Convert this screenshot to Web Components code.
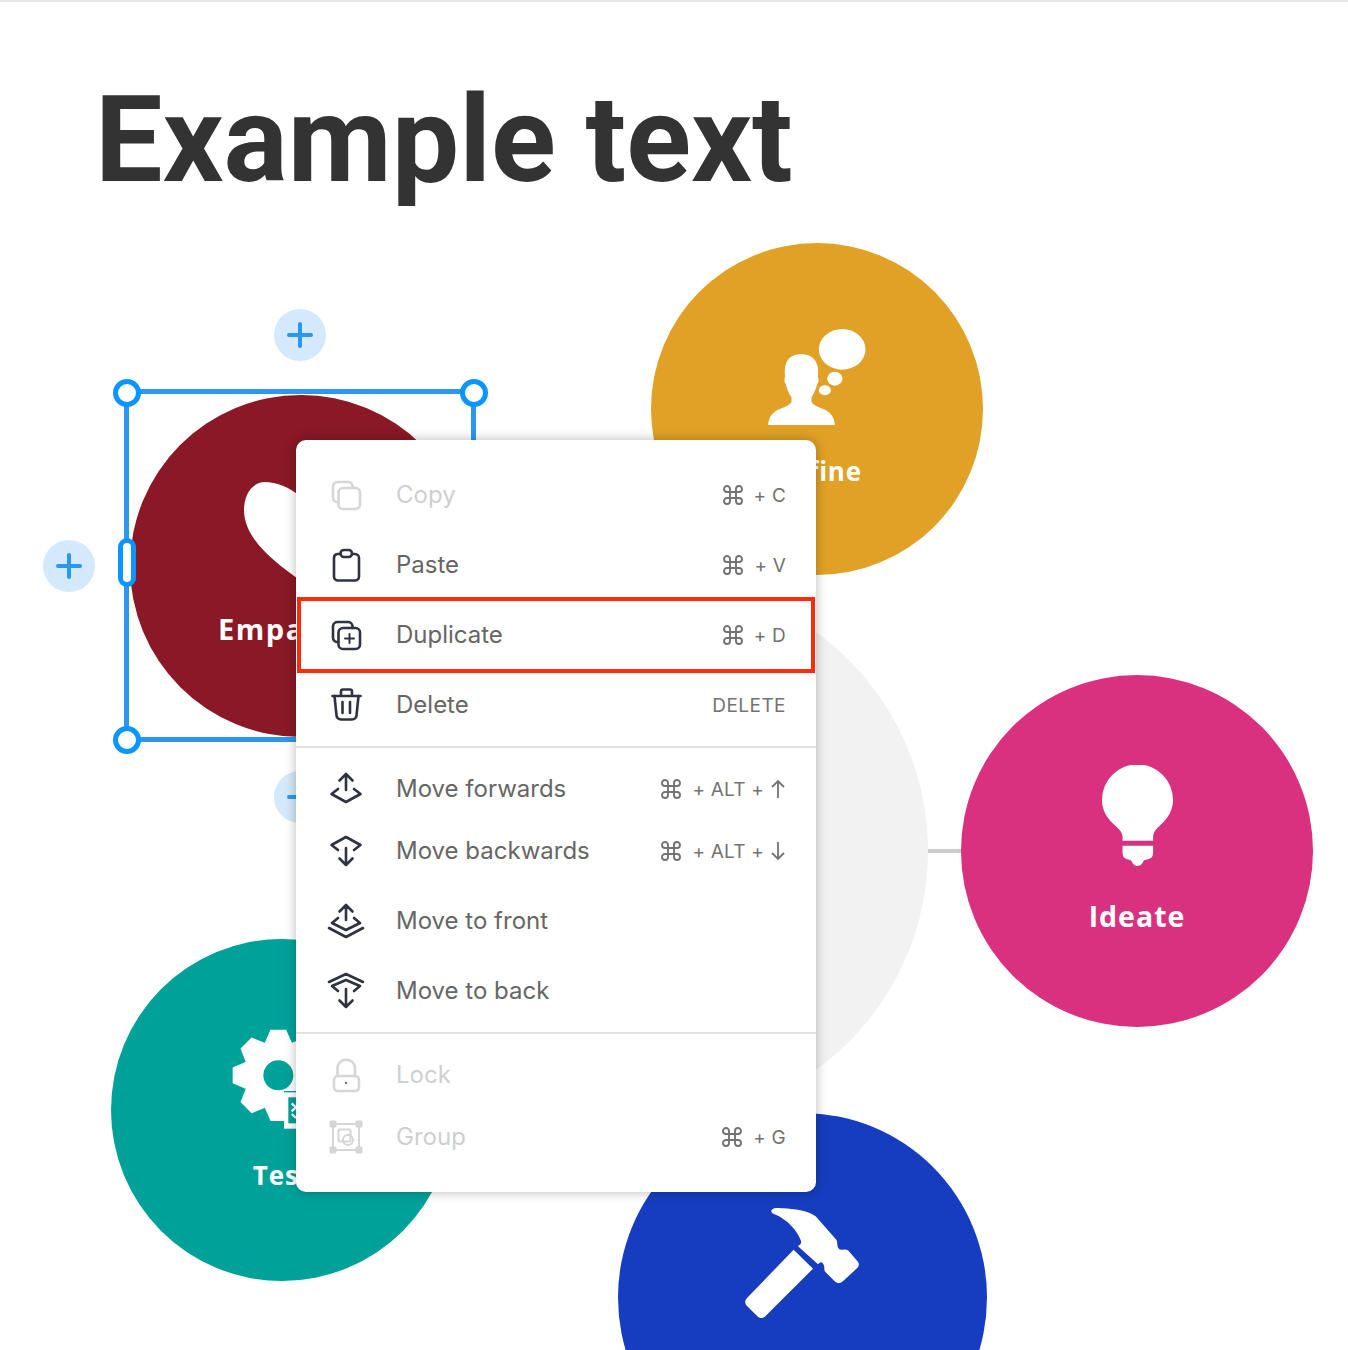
<!DOCTYPE html>
<html lang="en">
<head>
<meta charset="utf-8">
<title>Example text</title>
<style>
  html, body { margin: 0; background: #fff; }
</style>
</head>
<body>
<design-canvas>
  <page-title>Example text</page-title>

  <hub-circle></hub-circle>

  <flow-node style="--x:651px;--y:243px;--d:332px;--bg:#E0A126;--top:86px;--gap:23px;--fs:26px;--ls:.8px" label="Define">
    <svg slot="icon" width="100" height="99" viewBox="83 57 297 297">
      <ellipse cx="307" cy="118" rx="70" ry="61" fill="#fff"/>
      <ellipse cx="285" cy="206" rx="23" ry="21" fill="#fff"/>
      <ellipse cx="255" cy="241" rx="18" ry="15" fill="#fff"/>
      <path fill="#fff" d="M85 345C86 320 100 305 120 297C135 291 150 285 155 275V262C147 250 140 235 138 222C132 215 134 205 136 200C132 165 140 133 185 133C225 133 240 165 234 200C237 208 238 215 232 222C230 235 222 250 215 262V275C220 285 235 291 250 297C270 305 284 320 285 345Z"/>
    </svg>
  </flow-node>

  <flow-node style="--x:130px;--y:395px;--d:342px;--bg:#8A1826;--top:87px;--gap:27px;--fs:29px;--ls:1.500px" label="Empathize">
    <svg slot="icon" width="114" height="100" viewBox="244 482 114 100">
      <path fill="#fff" d="M301 497C290 487 275 482 265 482C252 482 244 495 244 510C244 538 272 560 301 581C330 560 358 538 358 510C358 495 350 482 337 482C327 482 312 487 301 497Z"/>
    </svg>
  </flow-node>

  <flow-node style="--x:961px;--y:675px;--d:352px;--bg:#D9307F;--top:90px;--gap:29px;--fs:28.500px" label="Ideate">
    <svg slot="icon" width="73" height="102" viewBox="60 45 220 307">
      <path fill="#fff" d="M125 273V262C125 245 110 235 100 225C78 205 63 180 63 150A107 107 0 0 1 277 150C277 180 262 205 240 225C230 235 217 245 217 262V273Z"/>
      <path fill="#fff" d="M125 288H217V310Q217 328 195 330C190 330 188 335 185 340C178 352 162 352 155 340C152 335 150 330 145 330Q125 328 125 310Z"/>
    </svg>
  </flow-node>

  <flow-node style="--x:111px;--y:939px;--d:342px;--bg:#00A199;--top:90px;--gap:26px;--fs:26px" label="Test">
    <gear-icon slot="icon"></gear-icon>
  </flow-node>

  <flow-node style="--x:618px;--y:1113px;--d:369px;--bg:#163DBF;--top:94px;--gap:24px">
    <svg slot="icon" width="117" height="112" viewBox="70 50 351 336" style="margin-left:-2px">
      <path fill="#fff" d="M158 57C165 52 172 53 190 54C225 56 262 60 288 78L350 148C355 155 350 165 358 176C365 182 375 173 385 180L413 212C420 220 418 228 412 234L368 274C360 280 352 280 345 273L318 246C310 238 318 230 310 220C306 212 300 216 295 222L235 168C240 162 248 160 243 150C235 125 205 88 165 72C155 68 152 62 158 57Z"/>
      <path fill="#fff" d="M222 178L280 235L137 378C130 385 120 385 113 378L82 347C75 340 75 330 82 323Z"/>
    </svg>
  </flow-node>

  <selection-frame></selection-frame>

  <add-button style="--x:274px;--y:309px"></add-button>
  <add-button style="--x:43px;--y:540px"></add-button>
  <add-button style="--x:274px;--y:771px"></add-button>

  <context-menu>
    <menu-item label="Copy" disabled style="--h:70px">
      <svg slot="icon" viewBox="0 0 40 40" width="40" height="40" fill="none" stroke="#d6d6d6" stroke-width="2.6" stroke-linecap="round" stroke-linejoin="round">
        <path d="M12 27H11A4.500 4.500 0 0 1 7 22.500V11A4.500 4.500 0 0 1 11.500 7H22A4.500 4.500 0 0 1 26.500 11V13"/>
        <rect x="12.500" y="13" width="21.500" height="21" rx="4.500"/>
      </svg>
      <key-combo slot="keys" text="+ C"></key-combo>
    </menu-item>
    <menu-item label="Paste" style="--h:70px">
      <svg slot="icon" viewBox="0 0 40 40" width="40" height="40" fill="none" stroke="#2f3240" stroke-width="2.6" stroke-linecap="round" stroke-linejoin="round">
        <path d="M14 9H11.500A4 4 0 0 0 8 13V31.500A4 4 0 0 0 12 35.500H29A4 4 0 0 0 33 31.500V13A4 4 0 0 0 29 9H26.500"/>
        <rect x="14.500" y="5" width="11.500" height="7" rx="3.500"/>
      </svg>
      <key-combo slot="keys" text="+ V"></key-combo>
    </menu-item>
    <menu-item label="Duplicate" style="--h:70px">
      <svg slot="icon" viewBox="0 0 40 40" width="40" height="40" fill="none" stroke="#2f3240" stroke-width="2.6" stroke-linecap="round" stroke-linejoin="round">
        <path d="M12 27H11A4.500 4.500 0 0 1 7 22.500V11A4.500 4.500 0 0 1 11.500 7H22A4.500 4.500 0 0 1 26.500 11V13"/>
        <rect x="12.500" y="13" width="21.500" height="21" rx="4.500"/>
        <path d="M23.500 19V28M19 23.500H28" stroke-width="2"/>
      </svg>
      <key-combo slot="keys" text="+ D"></key-combo>
    </menu-item>
    <menu-item label="Delete" style="--h:70px">
      <svg slot="icon" viewBox="0 0 40 40" width="40" height="40" fill="none" stroke="#2f3240" stroke-width="2.6" stroke-linecap="round" stroke-linejoin="round">
        <path d="M6.500 11H34.500M15 10V6.500A2 2 0 0 1 17 4.500H24A2 2 0 0 1 26 6.500V10"/>
        <path d="M8.500 11L10.500 30.500A4.500 4.500 0 0 0 15 34.500H26A4.500 4.500 0 0 0 30.500 30.500L32.500 11"/>
        <path d="M16.500 17V28M24 17V28"/>
      </svg>
      <span slot="keys" style="letter-spacing:.45px">DELETE</span>
    </menu-item>
    <menu-rule style="--above:6px;--below:10px"></menu-rule>
    <menu-item label="Move forwards" style="--h:62px">
      <svg slot="icon" viewBox="0 0 40 40" width="40" height="40" fill="none" stroke="#2f3240" stroke-width="2.6" stroke-linecap="round" stroke-linejoin="round">
        <path d="M20 21V5M13.500 11.500L20 5L26.500 11.500M12 20L5.500 25L20 33L34.500 25L28 20"/>
      </svg>
      <key-combo slot="keys" text="+ ALT +" arrow="up"></key-combo>
    </menu-item>
    <menu-item label="Move backwards" style="--h:62px">
      <svg slot="icon" viewBox="0 0 40 40" width="40" height="40" fill="none" stroke="#2f3240" stroke-width="2.6" stroke-linecap="round" stroke-linejoin="round">
        <path d="M20 17V34M13.500 27.500L20 34L26.500 27.500M12 19L5.500 14L20 6L34.500 14L28 19"/>
      </svg>
      <key-combo slot="keys" text="+ ALT +" arrow="down"></key-combo>
    </menu-item>
    <menu-item label="Move to front" style="--h:70px;margin-top:4px">
      <svg slot="icon" viewBox="0 0 40 40" width="40" height="40" fill="none" stroke="#2f3240" stroke-width="2.6" stroke-linecap="round" stroke-linejoin="round">
        <path d="M20 19V4M13.500 10.500L20 4L26.500 10.500M12 17L6 22L20 29L34 22L28 17M3 27L20 36L37 27"/>
      </svg>
    </menu-item>
    <menu-item label="Move to back" style="--h:70px">
      <svg slot="icon" viewBox="0 0 40 40" width="40" height="40" fill="none" stroke="#2f3240" stroke-width="2.6" stroke-linecap="round" stroke-linejoin="round">
        <path d="M20 18V36M13.500 29.500L20 36L26.500 29.500M12 20L6 15L20 9L34 15L28 20M3 11L20 3L37 11"/>
      </svg>
    </menu-item>
    <menu-rule style="--above:6px;--below:10px"></menu-rule>
    <menu-item label="Lock" disabled style="--h:62px">
      <svg slot="icon" viewBox="0 0 40 40" width="40" height="40" fill="none" stroke="#d6d6d6" stroke-width="2.6" stroke-linecap="round" stroke-linejoin="round">
        <rect x="8" y="21" width="25" height="15" rx="4"/>
        <path d="M11.500 21V12.500A8.800 8.800 0 0 1 29 12.500V21"/>
        <circle cx="20" cy="28" r="1.200" fill="#777" stroke="none"/>
      </svg>
    </menu-item>
    <menu-item label="Group" disabled style="--h:62px">
      <svg slot="icon" viewBox="0 0 40 40" width="40" height="40" fill="none" stroke="#d6d6d6" stroke-width="2" stroke-linejoin="round">
        <rect x="7" y="7" width="26" height="26"/>
        <g fill="#d6d6d6" stroke="none">
          <rect x="3.500" y="3.500" width="7" height="7" rx="1.500"/>
          <rect x="29.500" y="3.500" width="7" height="7" rx="1.500"/>
          <rect x="3.500" y="29.500" width="7" height="7" rx="1.500"/>
          <rect x="29.500" y="29.500" width="7" height="7" rx="1.500"/>
        </g>
        <rect x="12.500" y="12.500" width="12" height="12" rx="1.500"/>
        <circle cx="22" cy="23" r="5"/>
      </svg>
      <key-combo slot="keys" text="+ G"></key-combo>
    </menu-item>
  </context-menu>
</design-canvas>

<script>
function define(name, css, html, setup) {
  customElements.define(name, class extends HTMLElement {
    constructor() {
      super();
      this.attachShadow({ mode: 'open' });
    }

    connectedCallback() {
      this.shadowRoot.innerHTML = `<style>${css}</style>${html}`;
      if (setup) setup(this, this.shadowRoot);
    }
  });
}

define('design-canvas', `
  :host {
    display: block;
    position: relative;
    width: 1348px;
    height: 1350px;
    overflow: hidden;
    background: #fff;
    border-top: 2px solid #e6e6e6;
    box-sizing: border-box;
  }
`, `<slot></slot>`);

define('page-title', `
  :host {
    display: block;
    padding: 65px 0 0 95px;
    font: 700 120px/146px Roboto, "Liberation Sans", sans-serif;
    color: #333;
  }
`, `<slot></slot>`);

// grey disc in the middle of the diagram, with its line out to Ideate
define('hub-circle', `
  :host {
    position: absolute;
    left: 388px;
    top: 579px;
    width: 540px;
    height: 540px;
    border-radius: 50%;
    background: #f2f2f2;
  }
  .line {
    position: absolute;
    left: 540px;
    top: 268px;
    width: 34px;
    height: 4px;
    background: #ccc;
  }
`, `<div class="line"></div>`);

define('flow-node', `
  :host {
    position: absolute;
    left: var(--x);
    top: calc(var(--y) - 2px);
    width: var(--d);
    height: var(--d);
    border-radius: 50%;
    background: var(--bg);
    display: flex;
    flex-direction: column;
    align-items: center;
    gap: var(--gap);
    padding-top: var(--top);
    box-sizing: border-box;
  }
  ::slotted(*) { display: block; flex: none; }
  .label {
    font: 700 var(--fs, 28px)/40px "Open Sans", "Liberation Sans", sans-serif;
    letter-spacing: var(--ls, 1px);
    color: #fff;
  }
`, `<slot name="icon"></slot><div class="label"></div>`, (host, root) => {
  root.querySelector('.label').textContent = host.getAttribute('label') || '';
});

define('gear-icon', `
  :host { display: block; width: 100px; height: 100px; }
  svg { display: block; }
`, `<svg width="100" height="100" viewBox="66 57 300 300">
  <path class="gear" fill="#fff" fill-rule="evenodd"/>
  <rect x="222" y="243" width="150" height="113" fill="#fff"/>
  <rect x="222" y="243" width="150" height="4" fill="#00A199"/>
  <rect x="235" y="262" width="130" height="78" fill="#00A199"/>
  <path d="M245 280L258 292L245 304M245 312L258 324" fill="none" stroke="#fff" stroke-width="7"/>
</svg>`, (host, root) => {
  // eight flat teeth around a round hole
  const cx = 205, cy = 196, outer = 139, inner = 105, hole = 45;
  const pts = [];
  for (let i = 0; i < 8; i++) {
    const a = i * Math.PI / 4 - Math.PI / 2;
    [[-0.40, inner], [-0.17, outer], [0.17, outer], [0.40, inner]].forEach(([da, r]) => {
      pts.push(`${(cx + r * Math.cos(a + da)).toFixed(1)} ${(cy + r * Math.sin(a + da)).toFixed(1)}`);
    });
  }
  const d = `M${pts.join('L')}Z M${cx - hole} ${cy}a${hole} ${hole} 0 1 0 ${hole * 2} 0a${hole} ${hole} 0 1 0 ${-hole * 2} 0Z`;
  root.querySelector('.gear').setAttribute('d', d);
});

define('selection-frame', `
  :host {
    position: absolute;
    left: 124px;
    top: 387px;
    width: 352px;
    height: 353px;
    border: 5.500px solid #2C97EE;
    box-sizing: border-box;
  }
  .handle {
    position: absolute;
    box-sizing: border-box;
    width: 28px;
    height: 28px;
    border: 5px solid #0B96FF;
    border-radius: 14px;
    background: #fff;
  }
  .tl { left: -16.500px; top: -15.500px; }
  .tr { right: -16.500px; top: -15.500px; }
  .bl { left: -16.500px; bottom: -16.500px; }
  .ml { left: -11.500px; top: 143.500px; width: 18px; height: 49px; }
`, `<div class="handle tl"></div><div class="handle tr"></div><div class="handle bl"></div><div class="handle ml"></div>`);

define('add-button', `
  :host {
    position: absolute;
    left: var(--x);
    top: calc(var(--y) - 2px);
    width: 52px;
    height: 52px;
    border-radius: 50%;
    background: #D4E9FB;
    display: flex;
    align-items: center;
    justify-content: center;
  }
  svg { display: block; }
`, `<svg width="26" height="26" viewBox="0 0 26 26" fill="none" stroke="#2C97EE" stroke-width="4" stroke-linecap="round"><path d="M13 2V24M2 13H24"/></svg>`);

define('context-menu', `
  :host {
    position: absolute;
    left: 296px;
    top: 438px;
    width: 520px;
    height: 752px;
    padding: 20px 0 0;
    box-sizing: border-box;
    background: #fff;
    border-radius: 10px;
    box-shadow: 0 0 12px rgba(0, 0, 0, .28);
    display: flex;
    flex-direction: column;
  }
  .mark {
    position: absolute;
    left: 1px;
    top: 157px;
    width: 518px;
    height: 76px;
    border: 4px solid #FF2A0A;
    box-sizing: border-box;
  }
`, `<slot></slot><div class="mark"></div>`);

define('menu-item', `
  :host {
    display: flex;
    align-items: center;
    height: var(--h);
    padding: 0 30px;
    font: 400 24px "Inter", "Liberation Sans", sans-serif;
    color: #666;
    flex: none;
  }
  :host([disabled]) .label { color: #cfcfcf; }
  .icon { width: 40px; height: 40px; margin-right: 30px; flex: none; }
  ::slotted(svg) { display: block; }
  .label { flex: 1; padding-bottom: 2px; }
  .keys { display: flex; align-items: center; font-size: 19px; color: #737373; letter-spacing: .2px; }
`, `<div class="icon"><slot name="icon"></slot></div><div class="label"></div><div class="keys"><slot name="keys"></slot></div>`, (host, root) => {
  root.querySelector('.label').textContent = host.getAttribute('label');
});

define('menu-rule', `
  :host {
    display: block;
    flex: none;
    height: 2px;
    margin: var(--above) 0 var(--below);
    background: #e2e2e2;
  }
`, ``);

define('key-combo', `
  :host { display: flex; align-items: center; gap: 11px; }
  svg { display: block; }
`, `<svg width="20" height="20" viewBox="2 2 20 20" fill="none" stroke="#737373" stroke-width="1.900"><path d="M15 6V18A3 3 0 1 0 18 15H6A3 3 0 1 0 9 18V6A3 3 0 1 0 6 9H18A3 3 0 1 0 15 6Z"/></svg><span class="txt"></span>`, (host, root) => {
  root.querySelector('.txt').textContent = host.getAttribute('text');
  const arrow = host.getAttribute('arrow');
  if (arrow) {
    const d = arrow === 'up' ? 'M7 19V2M1 8L7 2L13 8' : 'M7 1V18M1 12L7 18L13 12';
    root.querySelector('.txt').insertAdjacentHTML('afterend',
      `<svg width="14" height="20" viewBox="0 0 14 20" fill="none" stroke="#737373" stroke-width="1.800" style="margin:0 1px 0 -4px"><path d="${d}"/></svg>`);
  }
});
</script>
</body>
</html>
